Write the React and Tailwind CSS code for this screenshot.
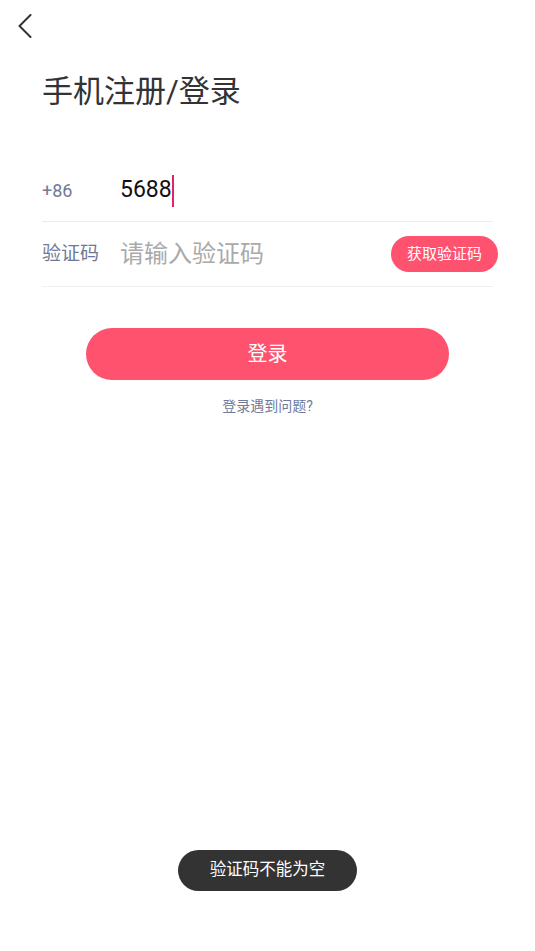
export default function App() {
  const font = { fontFamily: "Roboto, 'Noto Sans CJK SC', sans-serif" };
  return (
    <div className="relative w-[535px] h-[951px] bg-white overflow-hidden" style={font}>
      <div className="h-[52px] flex items-center pl-[18px]">
        <svg width="14" height="24" viewBox="0 0 14 24" fill="none">
          <path d="M12.5 1 L1.5 12 L12.5 23" stroke="#333" strokeWidth="2" strokeLinecap="round" strokeLinejoin="round" />
        </svg>
      </div>
      <div className="mt-[24px] pl-[42px] text-[31px] leading-[31px] text-[#333]">手机注册/登录</div>
      <div className="mt-[51px] mx-[42px]">
        <div className="h-[64px] flex items-center border-b border-[#ececec]">
          <div className="w-[78px] text-[18px] text-[#6e7a98] pt-[2px]">+86</div>
          <div className="flex items-center pt-[2px]">
            <span className="text-[23px] text-[#111]">5688</span>
            <span className="w-[2px] h-[32px] bg-[#e2236c]"></span>
          </div>
        </div>
        <div className="h-[65px] flex items-center border-b border-[#f0f0f0]">
          <div className="w-[78px] text-[19px] text-[#6e7a98]">验证码</div>
          <div className="flex-1 text-[24px] text-[#aaaaaa]">请输入验证码</div>
          <button className="-mr-[5px] w-[107px] h-[36px] rounded-full bg-[#ff526f] text-white text-[15px] flex items-center justify-center">获取验证码</button>
        </div>
      </div>
      <div className="mt-[41px] mx-[86px]">
        <button className="w-full h-[52px] rounded-full bg-[#ff526f] text-white text-[20px] flex items-center justify-center">登录</button>
      </div>
      <div className="mt-[16px] text-center text-[14px] text-[#6e7a98]">登录遇到问题?</div>
      <div className="absolute left-[178px] top-[850px] w-[179px] h-[41px] rounded-full bg-[#333333] text-white text-[16.5px] flex items-center justify-center">验证码不能为空</div>
    </div>
  );
}
